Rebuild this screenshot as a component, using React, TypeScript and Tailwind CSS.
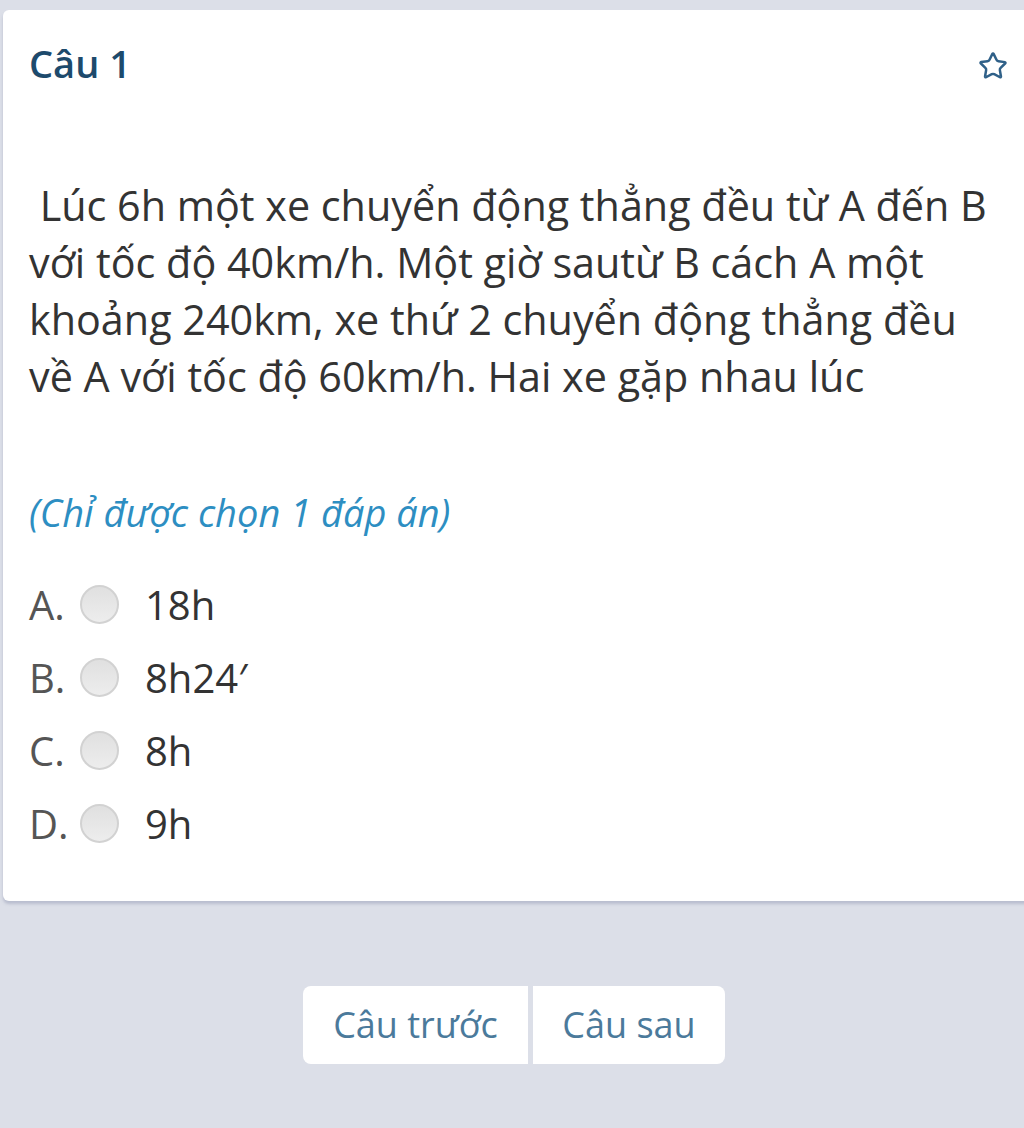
import React from 'react';
import { Star } from 'lucide-react';

const options = [
  { key: 'A', text: '18h' },
  { key: 'B', text: '8h24′' },
  { key: 'C', text: '8h' },
  { key: 'D', text: '9h' },
];

export default function App() {
  return (
    <div
      className="min-h-[1128px] w-[1024px] overflow-hidden bg-[#dcdfe8] pt-[10px]"
      style={{ fontFamily: '"Open Sans", "Noto Sans", sans-serif' }}
    >
      <div className="ml-[3px] w-[1040px] rounded-[6px] bg-white pl-[26px] pt-[28px] pb-[41px] shadow-[0_3px_3px_rgba(120,130,160,0.35)]">
        <div className="flex items-center justify-between pr-[34px]">
          <h1 className="text-[38px] font-semibold leading-[50px] text-[#1d4a6c]">Câu 1</h1>
          <Star size={30} strokeWidth={2} className="mr-[1px] mt-[6px] text-[#2f6088]" />
        </div>

        <div className="mt-[89px] text-[41.3px] leading-[57px] text-[#333]">
          <div>&nbsp;Lúc 6h một xe chuyển động thẳng đều từ A đến B</div>
          <div>với tốc độ 40km/h. Một giờ sautừ B cách A một</div>
          <div>khoảng 240km, xe thứ 2 chuyển động thẳng đều</div>
          <div>về A với tốc độ 60km/h. Hai xe gặp nhau lúc</div>
        </div>

        <p className="mt-[85px] text-[38px] italic leading-[45px] text-[#2d8ec2]">
          (Chỉ được chọn 1 đáp án)
        </p>

        <div className="mt-[33px] flex flex-col">
          {options.map((o) => (
            <div key={o.key} className="flex h-[73px] items-center">
              <span className="w-[51px] text-[40px] text-[#555]">{o.key}.</span>
              <span className="h-[39px] w-[39px] rounded-full border-2 border-[#d2d2d2] bg-gradient-to-b from-[#e0e0e0] to-[#ededed]" />
              <span className="ml-[26px] text-[40px] text-[#333]">{o.text}</span>
            </div>
          ))}
        </div>
      </div>

      <div className="mt-[85px] flex justify-center gap-[5px] pl-[4px]">
        <button className="h-[78px] w-[225px] rounded-l-[8px] bg-white text-[36px] text-[#4b7a9b]">
          Câu trước
        </button>
        <button className="h-[78px] w-[192px] rounded-r-[8px] bg-white text-[36px] text-[#4b7a9b]">
          Câu sau
        </button>
      </div>
    </div>
  );
}
